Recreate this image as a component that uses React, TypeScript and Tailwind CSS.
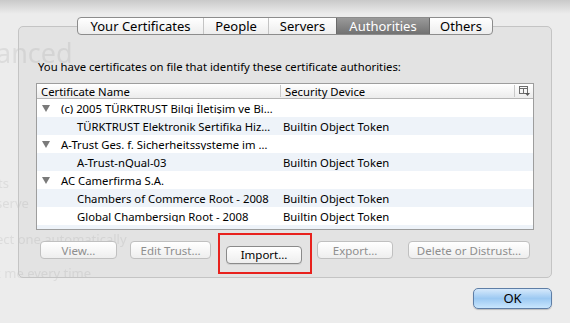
import React from 'react';

const tabs = [
  { label: 'Your Certificates', w: 'w-[125px]' },
  { label: 'People', w: 'w-[65px]' },
  { label: 'Servers', w: 'w-[68px]' },
  { label: 'Authorities', w: 'w-[94px]' },
  { label: 'Others', w: 'w-[62px]' },
];

type Row = { name: string; device?: string; parent?: boolean };

const rows: Row[] = [
  { name: '(c) 2005 TÜRKTRUST Bilgi İletişim ve Bi…', parent: true },
  { name: 'TÜRKTRUST Elektronik Sertifika Hiz…', device: 'Builtin Object Token' },
  { name: 'A-Trust Ges. f. Sicherheitssysteme im …', parent: true },
  { name: 'A-Trust-nQual-03', device: 'Builtin Object Token' },
  { name: 'AC Camerfirma S.A.', parent: true },
  { name: 'Chambers of Commerce Root - 2008', device: 'Builtin Object Token' },
  { name: 'Global Chambersign Root - 2008', device: 'Builtin Object Token' },
];

function Triangle() {
  return (
    <svg width="8" height="7" viewBox="0 0 8 7" className="shrink-0">
      <path d="M0 0 H8 L4 7 Z" fill="#7a7a7a" />
    </svg>
  );
}

function ColumnsIcon() {
  return (
    <svg width="11" height="10" viewBox="0 0 11 10">
      <rect x="0.5" y="0.5" width="8" height="7" fill="none" stroke="#6d6d6d" />
      <line x1="0.5" y1="2.5" x2="8.5" y2="2.5" stroke="#6d6d6d" />
      <line x1="4.5" y1="2.5" x2="4.5" y2="7.5" stroke="#6d6d6d" />
      <path d="M6 7 H11 L8.5 10 Z" fill="#555" />
    </svg>
  );
}

function MacButton({ label, disabled, className = '' }: { label: string; disabled?: boolean; className?: string }) {
  return (
    <button
      className={`h-[18px] rounded-[4px] border text-[11.5px] leading-none bg-gradient-to-b from-white to-[#eeeeee] ${
        disabled ? 'border-[#c0c0c0] text-[#8e8e8e]' : 'border-[#8a8a8a] text-black shadow-[0_1px_0_rgba(0,0,0,0.08)]'
      } ${className}`}
    >
      {label}
    </button>
  );
}

export default function App() {
  return (
    <div
      className="relative w-[570px] h-[323px] overflow-hidden bg-[#ececec] text-black"
      style={{ fontFamily: '"Noto Sans", "DejaVu Sans", sans-serif' }}
    >
      {/* ghost of the window behind the sheet */}
      <div className="absolute inset-0 pointer-events-none select-none text-[#dcdcdc] blur-[0.6px]">
        <div className="absolute left-[-4px] top-[33px] text-[27px]">anced</div>
        <div className="absolute left-[-2px] top-[174px] text-[13px]">ts</div>
        <div className="absolute left-[-4px] top-[194px] text-[13px]">serve</div>
        <div className="absolute left-[-4px] top-[230px] text-[13px]">ect one automatically</div>
        <div className="absolute left-[-6px] top-[264px] text-[13px]">k me every time</div>
      </div>
      <div className="absolute inset-x-0 top-0 h-[14px] bg-gradient-to-b from-[#c9c9c9] to-transparent" />

      <div className="relative flex flex-col pt-[26px] pl-[18px] pr-[18px]">
        {/* group box */}
        <div className="relative h-[252px] rounded-[5px] border border-[#c4c4c4] bg-[#000000]/[0.035]">
          {/* tab bar overlapping the border */}
          <div className="absolute left-[58px] top-[-10px] flex h-[18px] rounded-[4px] border border-[#8c8c8c] bg-gradient-to-b from-white to-[#ededed] text-[13px] leading-none overflow-hidden">
            {tabs.map((t, i) => (
              <div
                key={t.label}
                className={`flex items-center justify-center ${t.w} ${
                  t.label === 'Authorities'
                    ? 'bg-gradient-to-b from-[#9a9a9a] to-[#727272] text-white border-x border-[#6a6a6a]'
                    : i > 0 && tabs[i - 1].label !== 'Authorities'
                    ? 'border-l border-[#c4c4c4]'
                    : ''
                }`}
              >
                {t.label}
              </div>
            ))}
          </div>

          <p className="mt-[34px] ml-[19px] text-[11.3px] leading-none">
            You have certificates on file that identify these certificate authorities:
          </p>

          {/* table */}
          <div className="mt-[11px] ml-[17px] w-[498px] h-[147px] border border-[#9d9d9d] bg-white overflow-hidden text-[11.3px]">
            <div className="flex h-[15px] items-center border-b border-[#b5b5b5] bg-gradient-to-b from-white to-[#ececec] leading-none">
              <div className="w-[244px] pl-[4px] border-r border-[#c9c9c9] h-[12px] flex items-center">Certificate Name</div>
              <div className="w-[234px] pl-[4px] border-r border-[#c9c9c9] h-[12px] flex items-center">Security Device</div>
              <div className="flex-1 flex justify-center">
                <ColumnsIcon />
              </div>
            </div>
            {rows.map((r, i) => (
              <div
                key={r.name}
                className={`flex h-[18px] items-center leading-none ${i % 2 === 1 ? 'bg-[#eef3f9]' : 'bg-white'}`}
              >
                <div className="w-[244px] flex items-center whitespace-nowrap overflow-hidden">
                  {r.parent ? (
                    <>
                      <span className="ml-[5px] mr-[11px] flex">
                        <Triangle />
                      </span>
                      {r.name}
                    </>
                  ) : (
                    <span className="ml-[40px]">{r.name}</span>
                  )}
                </div>
                <div className="pl-[2px] whitespace-nowrap">{r.device}</div>
              </div>
            ))}
            <div className="h-[18px] bg-[#eef3f9]" />
          </div>

          {/* buttons */}
          <div className="flex mt-[11px] ml-[21px]">
            <MacButton label="View…" disabled className="w-[77px]" />
            <MacButton label="Edit Trust…" disabled className="w-[81px] ml-[13px]" />
            <div className="relative ml-[15px]">
              <MacButton label="Import…" className="w-[76px]" />
              <div className="absolute left-[-8px] right-[-10px] top-[-8px] bottom-[-9px] border-2 border-[#e8211d] pointer-events-none" />
            </div>
            <MacButton label="Export…" disabled className="w-[76px] ml-[15px]" />
            <MacButton label="Delete or Distrust…" disabled className="w-[122px] ml-[15px]" />
          </div>
        </div>

        {/* OK */}
        <div className="flex justify-end mt-[10px]">
          <button className="w-[79px] h-[21px] rounded-[5px] border border-[#5e7ea6] bg-gradient-to-b from-[#d6e9fb] via-[#9cc9f2] to-[#c9e6fd] text-[13px] leading-none shadow-[0_1px_1px_rgba(0,0,0,0.2)]">
            OK
          </button>
        </div>
      </div>
    </div>
  );
}
